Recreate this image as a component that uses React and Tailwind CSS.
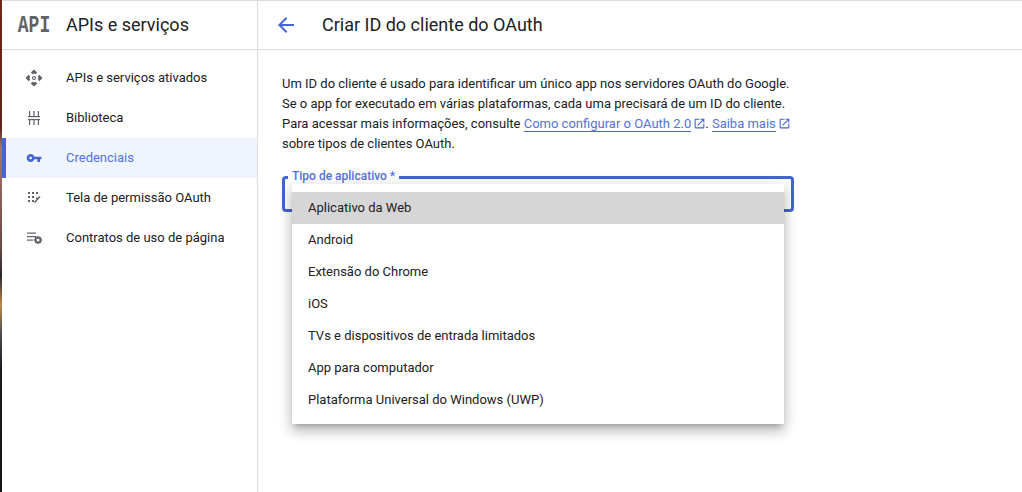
import React from "react";

function ApiIcon() {
  return (
    <svg width="18" height="18" viewBox="0 0 18 18" fill="#5f6368">
      <path d="M9 0.5 12.2 3.6 10.6 5.2 9 4.4 7.4 5.2 5.8 3.6Z" />
      <path d="M9 17.5 5.8 14.4 7.4 12.8 9 13.6 10.6 12.8 12.2 14.4Z" />
      <path d="M0.5 9 3.6 5.8 5.2 7.4 4.4 9 5.2 10.6 3.6 12.2Z" />
      <path d="M17.5 9 14.4 12.2 12.8 10.6 13.6 9 12.8 7.4 14.4 5.8Z" />
      <circle cx="9" cy="9" r="1.5" fill="none" stroke="#5f6368" strokeWidth="1.2" />
    </svg>
  );
}

function LibraryIcon() {
  return (
    <svg width="18" height="18" viewBox="0 0 18 18" fill="#5f6368">
      <rect x="4" y="2" width="1.2" height="5" />
      <rect x="8.4" y="2" width="1.2" height="5" />
      <rect x="12.8" y="2" width="1.2" height="5" />
      <rect x="3" y="7" width="12" height="1.2" />
      <rect x="3" y="10" width="12" height="1.2" />
      <rect x="4" y="10" width="1.2" height="6" />
      <rect x="8.4" y="10" width="1.2" height="6" />
      <rect x="12.8" y="10" width="1.2" height="6" />
    </svg>
  );
}

function KeyIcon() {
  return (
    <svg width="16" height="16" viewBox="0 0 24 24" fill="#4465d2">
      <path d="M12.65 10C11.83 7.67 9.61 6 7 6c-3.31 0-6 2.69-6 6s2.69 6 6 6c2.61 0 4.83-1.67 5.65-4H17v4h4v-4h2v-4H12.65zM7 14c-1.1 0-2-.9-2-2s.9-2 2-2 2 .9 2 2-.9 2-2 2z" />
    </svg>
  );
}

function ConsentIcon() {
  return (
    <svg width="18" height="18" viewBox="0 0 18 18" fill="#5f6368">
      <rect x="3" y="3" width="2" height="2" />
      <rect x="7" y="3" width="2" height="2" />
      <rect x="11" y="3" width="2" height="2" />
      <rect x="3" y="7" width="2" height="2" />
      <rect x="7" y="7" width="2" height="2" />
      <rect x="3" y="11" width="2" height="2" />
      <rect x="7" y="11" width="2" height="2" />
      <path d="M9.5 13.5 15 7.5" fill="none" stroke="#5f6368" strokeWidth="1.5" />
      <path d="M11 9.2h2.4" fill="none" stroke="#5f6368" strokeWidth="1.2" />
    </svg>
  );
}

function ContractIcon() {
  return (
    <svg width="18" height="18" viewBox="0 0 18 18" fill="#5f6368">
      <rect x="2" y="3.5" width="9" height="1.2" />
      <rect x="2" y="7" width="9" height="1.2" />
      <rect x="2" y="10.5" width="6" height="1.2" />
      <circle cx="13" cy="11" r="2.5" fill="none" stroke="#5f6368" strokeWidth="2" />
      <path d="M13 6.9v1.6M13 13.5v1.6M8.9 11h1.6M15.5 11h1.6M10.2 8.2l1 1M14.8 12.8l1 1M15.8 8.2l-1 1M11.2 12.8l-1 1" stroke="#5f6368" strokeWidth="1.4" fill="none" />
    </svg>
  );
}

function OpenIcon() {
  return (
    <svg className="inline-block align-[-2px] ml-[2px] -mr-[1px]" width="13" height="13" viewBox="0 0 24 24" fill="#4465d2">
      <path d="M19 19H5V5h7V3H5c-1.11 0-2 .9-2 2v14c0 1.1.89 2 2 2h14c1.1 0 2-.9 2-2v-7h-2v7zM14 3v2h3.59l-9.83 9.83 1.41 1.41L19 6.41V10h2V3h-7z" />
    </svg>
  );
}

const navItems = [
  { label: "APIs e serviços ativados", icon: <ApiIcon /> },
  { label: "Biblioteca", icon: <LibraryIcon /> },
  { label: "Credenciais", icon: <KeyIcon />, active: true },
  { label: "Tela de permissão OAuth", icon: <ConsentIcon /> },
  { label: "Contratos de uso de página", icon: <ContractIcon /> },
];

const tipos = [
  "Aplicativo da Web",
  "Android",
  "Extensão do Chrome",
  "iOS",
  "TVs e dispositivos de entrada limitados",
  "App para computador",
  "Plataforma Universal do Windows (UWP)",
];

export default function App() {
  return (
    <div className="flex h-[492px] w-[1022px] overflow-hidden bg-white font-['Roboto',sans-serif] text-[#202124]">
      {/* faixa da janela de tras */}
      <div className="w-[2px] shrink-0 bg-[linear-gradient(180deg,#6b2a18_0%,#5a2416_26%,#a9766a_30%,#6b4a45_50%,#2a2630_56%,#b98a4a_62%,#4a4a50_68%,#1d1a22_75%,#15131a_100%)]" />

      <div className="flex flex-1 flex-col border-t border-[#dadce0]">
        <div className="flex flex-1">
          {/* === SIDEBAR === */}
          <aside className="w-[256px] shrink-0 border-r border-[#dadce0]">
            <div className="flex h-[49px] items-center border-b border-[#dadce0]">
              <div className="flex w-[64px] justify-center">
                <span className="font-['Liberation_Mono',monospace] text-[18px] font-bold leading-none text-[#5f6368] scale-y-[1.3]">
                  API
                </span>
              </div>
              <span className="text-[18px] leading-6">APIs e serviços</span>
            </div>

            <nav className="pt-2">
              {navItems.map((item) => (
                <div
                  key={item.label}
                  className={
                    item.active
                      ? "relative flex h-10 items-center bg-[#f0f4fd] text-[13px] text-[#5472dd]"
                      : "relative flex h-10 items-center text-[13px]"
                  }
                >
                  {item.active && <div className="absolute inset-y-0 left-0 w-[4px] bg-[#4465d2]" />}
                  <div className="flex w-[64px] justify-center">{item.icon}</div>
                  <span>{item.label}</span>
                </div>
              ))}
            </nav>
          </aside>

          {/* === MAIN === */}
          <main className="flex-1">
            <div className="flex h-[49px] items-center border-b border-[#dadce0]">
              <div className="flex w-[64px] justify-center pr-2">
                <svg width="24" height="24" viewBox="0 0 24 24" fill="#4465d2">
                  <path d="M20 11H7.83l5.59-5.59L12 4l-8 8 8 8 1.41-1.41L7.83 13H20v-2z" />
                </svg>
              </div>
              <h1 className="text-[18px] leading-6">Criar ID do cliente do OAuth</h1>
            </div>

            <div className="w-[560px] pl-6 pt-6">
              <p className="text-[13px] leading-5">
                Um ID do cliente é usado para identificar um único app nos servidores OAuth do Google.
                <br />
                Se o app for executado em várias plataformas, cada uma precisará de um ID do cliente.
                <br />
                Para acessar mais informações, consulte{" "}
                <span className="border-b border-[#4465d2] text-[#5472dd]">Como configurar o OAuth 2.0</span>
                <OpenIcon />.{" "}
                <span className="border-b border-[#4465d2] text-[#5472dd]">Saiba mais</span>
                <OpenIcon />
                <br />
                sobre tipos de clientes OAuth.
              </p>

              <div className="relative mt-[22px] h-9 w-[512px] rounded border-[3px] border-[#4465d2]">
                <label className="absolute -top-[10px] left-[3px] bg-white px-1 text-[12px] leading-[14px] font-medium text-[#5472dd]">
                  Tipo de aplicativo *
                </label>
                <ul className="absolute left-[7px] top-[5px] z-10 w-[492px] bg-white py-2 text-[13px] shadow-[0_5px_5px_-3px_rgba(0,0,0,.2),0_8px_10px_1px_rgba(0,0,0,.14),0_3px_14px_2px_rgba(0,0,0,.12)]">
                  {tipos.map((t, i) => (
                    <li
                      key={t}
                      className={i === 0 ? "flex h-8 items-center bg-[#d6d6d6] pl-4" : "flex h-8 items-center pl-4"}
                    >
                      {t}
                    </li>
                  ))}
                </ul>
              </div>
            </div>
          </main>
        </div>
      </div>
    </div>
  );
}
